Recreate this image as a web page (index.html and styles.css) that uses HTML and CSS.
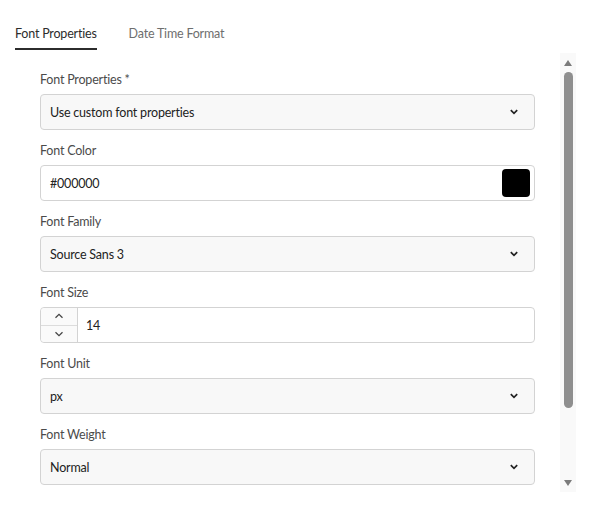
FILE: index.html
```html
<!DOCTYPE html>
<html>
<head>
<meta charset="utf-8">
<link rel="stylesheet" href="styles.css">
</head>
<body>
<div class="app">
  <div class="tabs">
    <div class="tab active">Font Properties</div>
    <div class="tab">Date Time Format</div>
  </div>
  <div class="panel">
    <div class="form">
      <div class="field">
        <div class="label">Font Properties *</div>
        <div class="select"><span>Use custom font properties</span><svg class="chev" width="10" height="6" viewBox="0 0 10 6"><path d="M1.8 1.2 L5 4.4 L8.2 1.2" fill="none" stroke="#222" stroke-width="1.7"/></svg></div>
      </div>
      <div class="field">
        <div class="label">Font Color</div>
        <div class="input color"><span>#000000</span><div class="swatch"></div></div>
      </div>
      <div class="field">
        <div class="label">Font Family</div>
        <div class="select"><span>Source Sans 3</span><svg class="chev" width="10" height="6" viewBox="0 0 10 6"><path d="M1.8 1.2 L5 4.4 L8.2 1.2" fill="none" stroke="#222" stroke-width="1.7"/></svg></div>
      </div>
      <div class="field">
        <div class="label">Font Size</div>
        <div class="input number">
          <div class="stepper">
            <div class="step"><svg width="10" height="6" viewBox="0 0 10 6"><path d="M1.5 4.8 L5 1.4 L8.5 4.8" fill="none" stroke="#444" stroke-width="1.3"/></svg></div>
            <div class="step"><svg width="10" height="6" viewBox="0 0 10 6"><path d="M1.5 1.2 L5 4.6 L8.5 1.2" fill="none" stroke="#444" stroke-width="1.3"/></svg></div>
          </div>
          <span class="num">14</span>
        </div>
      </div>
      <div class="field">
        <div class="label">Font Unit</div>
        <div class="select"><span>px</span><svg class="chev" width="10" height="6" viewBox="0 0 10 6"><path d="M1.8 1.2 L5 4.4 L8.2 1.2" fill="none" stroke="#222" stroke-width="1.7"/></svg></div>
      </div>
      <div class="field">
        <div class="label">Font Weight</div>
        <div class="select"><span>Normal</span><svg class="chev" width="10" height="6" viewBox="0 0 10 6"><path d="M1.8 1.2 L5 4.4 L8.2 1.2" fill="none" stroke="#222" stroke-width="1.7"/></svg></div>
      </div>
    </div>
    <div class="scrollbar">
      <div class="sb-btn"><div class="tri up"></div></div>
      <div class="thumb"></div>
      <div class="sb-fill"></div>
      <div class="sb-btn"><div class="tri down"></div></div>
    </div>
  </div>
</div>
</body>
</html>
```
FILE: styles.css
```css
* { box-sizing: border-box; }
html, body { margin: 0; padding: 0; background: #fff; }
body {
  font-family: Lato, "Open Sans", sans-serif;
  font-size: 12.5px;
  letter-spacing: -0.2px;
  color: #222;
}
.app { width: 590px; height: 510px; }
.tabs {
  display: flex;
  gap: 32px;
  padding-left: 15px;
}
.tab {
  padding-top: 25px;
  padding-bottom: 5px;
  line-height: 18px;
  border-bottom: 2px solid transparent;
  color: #6e6e6e;
}
.tab.active {
  color: #2c2c2c;
  border-bottom-color: #2c2c2c;
}
.panel {
  display: flex;
  margin-top: 3px;
  height: 439px;
  padding-left: 40px;
}
.form {
  width: 495px;
  padding-top: 17px;
  overflow: hidden;
}
.field { margin-bottom: 11px; }
.label {
  line-height: 20px;
  margin-bottom: 4px;
  color: #4b4b4b;
}
.select, .input {
  height: 36px;
  border: 1px solid #d3d3d3;
  border-radius: 4px;
  display: flex;
  align-items: center;
}
.select {
  background: #f8f8f8;
  padding: 0 15px 0 9px;
  justify-content: space-between;
}
.input { background: #fff; }
.input.color {
  padding: 0 4px 0 9px;
  justify-content: space-between;
}
.swatch {
  width: 28px;
  height: 28px;
  background: #000;
  border-radius: 4px;
}
.stepper {
  width: 37px;
  height: 100%;
  border-right: 1px solid #d3d3d3;
  background: #fafafa;
  display: flex;
  flex-direction: column;
  border-radius: 4px 0 0 4px;
}
.step {
  flex: 1;
  display: flex;
  align-items: center;
  justify-content: center;
}
.step + .step { border-top: 1px solid #dcdcdc; }
.num { padding-left: 8px; }
.scrollbar {
  margin-left: 25px;
  width: 16px;
  height: 100%;
  background: #f9f9f9;
  display: flex;
  flex-direction: column;
  align-items: center;
}
.sb-btn {
  height: 17px;
  width: 100%;
  display: flex;
  align-items: center;
  justify-content: center;
}
.tri { width: 0; height: 0; border-left: 4.5px solid transparent; border-right: 4.5px solid transparent; }
.tri.up { border-bottom: 6px solid #7b7b7b; margin-top: 2px; }
.tri.down { border-top: 6px solid #7b7b7b; margin-bottom: 1px; }
.thumb {
  margin-top: 2px;
  width: 9px;
  height: 336px;
  background: #8f8f8f;
  border-radius: 5px;
}
.sb-fill { flex: 1; }
```
